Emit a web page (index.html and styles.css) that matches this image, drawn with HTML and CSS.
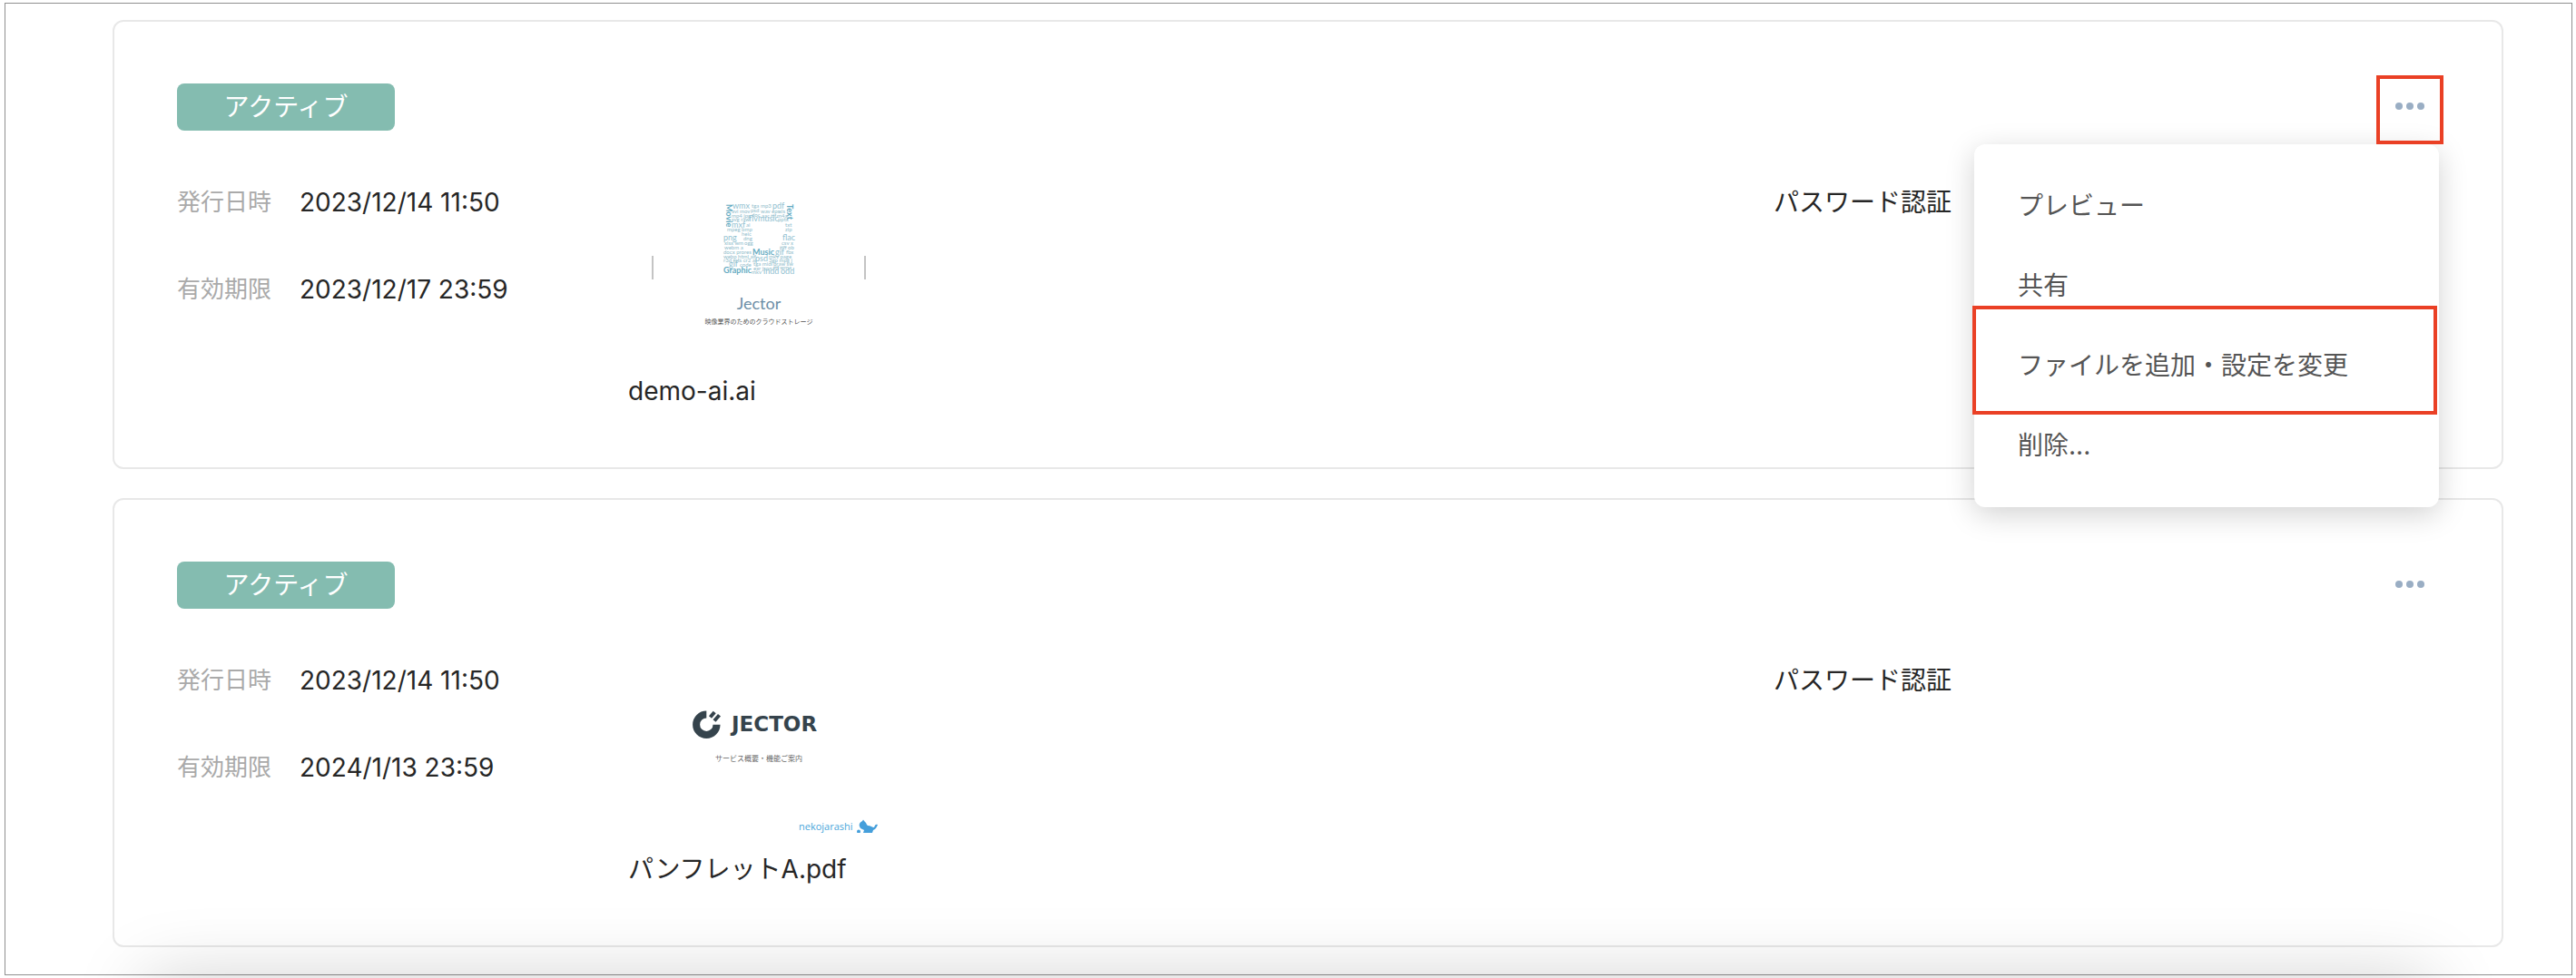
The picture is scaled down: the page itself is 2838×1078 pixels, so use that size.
FILE: index.html
```html
<!DOCTYPE html>
<html lang="ja">
<head>
<meta charset="utf-8">
<title>共有リンク</title>
<link rel="stylesheet" href="styles.css">
</head>
<body>
<main class="frame">
  <article class="card">
    <header class="card-head">
      <span class="badge">アクティブ</span>
      <div class="more-wrap more-marked">
        <button class="more" type="button" aria-label="メニュー" aria-expanded="true"><svg width="34" height="10" viewBox="0 0 34 10"><circle cx="5" cy="5" r="4"/><circle cx="17" cy="5" r="4"/><circle cx="29" cy="5" r="4"/></svg></button>
        <div class="menu">
          <button class="menu-item" type="button">プレビュー</button>
          <button class="menu-item" type="button">共有</button>
          <button class="menu-item menu-item-marked" type="button">ファイルを追加・設定を変更</button>
          <button class="menu-item" type="button">削除...</button>
        </div>
      </div>
    </header>
    <div class="card-body">
      <dl class="dates">
        <div class="date-row"><dt>発行日時</dt><dd>2023/12/14 11:50</dd></div>
        <div class="date-row"><dt>有効期限</dt><dd>2023/12/17 23:59</dd></div>
      </dl>
      <figure class="file">
        <svg class="thumb" viewBox="0 0 288 190">
          <path class="edge" d="M27 81v26M261 81v26"/>
          <g class="cloud">
            <text class="strong" transform="translate(108 24) rotate(90)">Movie</text>
            <text class="strong" transform="translate(175 24) rotate(90)">Text</text>
            <text class="large" x="115" y="29">wmx</text>
            <text x="136" y="28">tga</text>
            <text x="146" y="28">mp3</text>
            <text class="large" x="159" y="29">pdf</text>
            <text x="114" y="34">avi mov</text>
            <text x="135" y="33">psd</text>
            <text x="146" y="34">wav eps</text>
            <text x="166" y="34">xls</text>
            <text x="114" y="39">mp4 jpg</text>
            <text x="136" y="38">doc</text>
            <text x="147" y="39">aac tif</text>
            <text x="164" y="39">m4a</text>
            <text x="114" y="43">svg raw</text>
            <text class="large" x="133" y="43">flv</text>
            <text class="large" x="143" y="43">music</text>
            <text x="165" y="43">pptx</text>
            <text class="large" x="114" y="50">mxf</text>
            <text x="130" y="49">ai</text>
            <text x="173" y="49">txt</text>
            <text x="173" y="54">zip</text>
            <text x="109" y="54">mpeg bmp</text>
            <text x="125" y="59">heic</text>
            <text x="127" y="64">dng</text>
            <text x="128" y="69">ogg</text>
            <text class="large" x="105" y="64">png</text>
            <text class="large" x="170" y="64">flac</text>
            <text x="106" y="69">xlsx wm</text>
            <text x="169" y="69">csv x</text>
            <text x="106" y="74">webm a</text>
            <text x="167" y="74">tiff ob</text>
            <text x="105" y="79">docx prores</text>
            <text class="strong" x="137" y="80">Music</text>
            <text class="large" x="162" y="80">gif</text>
            <text x="174" y="79">fbx</text>
            <text x="105" y="84">webp html aif</text>
            <text class="large" x="140" y="87">psd</text>
            <text x="155" y="84">mkv page</text>
            <text x="105" y="88">r3d mts cr2 ai</text>
            <text x="155" y="88">3gp mpg j</text>
            <text class="large" x="111" y="93">gif</text>
            <text x="123" y="93">code</text>
            <text x="138" y="92">tga midi</text>
            <text x="160" y="92">braw sw</text>
            <text x="138" y="97">exr json</text>
            <text x="160" y="96">ttf wma</text>
            <text class="strong" x="105" y="100">Graphic</text>
            <text x="136" y="101">mkv</text>
            <text class="large" x="149" y="101">indd</text>
            <text class="large" x="168" y="101">odd</text>
          </g>
          <text class="cloud-title" x="144" y="140" text-anchor="middle">Jector</text>
          <text class="caption" x="144" y="156" text-anchor="middle">映像業界のためのクラウドストレージ</text>
        </svg>
        <figcaption>demo-ai.ai</figcaption>
      </figure>
      <p class="auth">パスワード認証</p>
    </div>
  </article>
  <article class="card">
    <header class="card-head">
      <span class="badge">アクティブ</span>
      <div class="more-wrap">
        <button class="more" type="button" aria-label="メニュー"><svg width="34" height="10" viewBox="0 0 34 10"><circle cx="5" cy="5" r="4"/><circle cx="17" cy="5" r="4"/><circle cx="29" cy="5" r="4"/></svg></button>
      </div>
    </header>
    <div class="card-body">
      <dl class="dates">
        <div class="date-row"><dt>発行日時</dt><dd>2023/12/14 11:50</dd></div>
        <div class="date-row"><dt>有効期限</dt><dd>2024/1/13 23:59</dd></div>
      </dl>
      <figure class="file">
        <svg class="thumb" viewBox="0 0 288 190">
          <path class="mark-ring" d="M86.300 59.500A11.200 11.200 0 1 0 97.500 70.700"/>
          <path class="mark-rays" d="M90.500 62.500L95.200 57M95 66.500L100.500 60.200"/>
          <text class="logo" x="114" y="78">JECTOR</text>
          <text class="caption-large" x="144" y="111" text-anchor="middle">サービス概要・機能ご案内</text>
          <text class="maker" x="188" y="187">nekojarashi</text>
          <path class="cat" d="M255 183C254 180 256 178 258 177L259 175.500L261 178C263 179 262 181 264 182C267 182 269 184 271 184C272 181 273 180 275 181C274 183 273 186 270 187L269 190H259L260 187L256 185Z"/>
          <circle class="cat" cx="254" cy="188.500" r="2"/>
        </svg>
        <figcaption>パンフレットA.pdf</figcaption>
      </figure>
      <p class="auth">パスワード認証</p>
    </div>
  </article>
</main>
<div class="dock"></div>
</body>
</html>
```
FILE: styles.css
```css
*, *::after { box-sizing: border-box; margin: 0; padding: 0; }
body { background: #fff; padding: 3px 4px 3px 5px; color: #262626; font: 28px/44px Inter, "Noto Sans CJK JP", sans-serif; }
button { font: inherit; color: inherit; background: none; border: 0; }
.frame { border: 1px solid #8f8f8f; padding: 18px 75px 30px 118px; display: grid; gap: 32px; }
.card { border: 2px solid #e8e8e8; border-radius: 12px; padding: 68px 64px 68px 69px; }
.card-head { display: flex; justify-content: space-between; }
.badge { width: 240px; height: 52px; line-height: 52px; border-radius: 8px; background: #84bcb0; color: #fff; text-align: center; }

/* Three-dot button and its open menu */
.more-wrap { position: relative; }
.more { width: 74px; height: 50px; display: grid; place-items: center; fill: #9aaec4; }
.more-marked::after { content: ""; position: absolute; z-index: 3; inset: -9px 0 auto; height: 76px; border: 4px solid #ea4025; pointer-events: none; }
.menu { position: absolute; z-index: 2; top: 67px; right: 5px; width: 512px; padding: 24px 0; border-radius: 12px; background: #fff; box-shadow: 0 8px 32px rgba(0,0,0,.18); color: #555; }
.menu-item { position: relative; display: block; width: 100%; height: 88px; padding: 0 48px; text-align: left; }
.menu-item-marked::after { content: ""; position: absolute; inset: -22px 2px -10px -2px; border: 4px solid #ea4025; pointer-events: none; }

.card-body { display: flex; padding-top: 57px; }
.dates { width: 497px; }
.date-row { display: flex; height: 96px; line-height: 44px; }
dt { width: 135px; font-size: 26px; color: #aaa; }
.file { width: 1262px; }
.thumb { display: block; width: 288px; height: 190px; margin-bottom: 18px; }
figcaption { height: 38px; }

/* File previews */
.edge { stroke: #c4c4c4; stroke-width: 2; }
.cloud { font: 6px Lato, sans-serif; fill: #8fbccb; }
.cloud .large { font-size: 9px; fill: #8fc0d0; }
.cloud .strong { font-size: 9px; font-weight: 700; fill: #65abc2; }
.cloud-title { font: 18px Lato, sans-serif; fill: #6c8ea6; }
.caption { font: 7px "Noto Sans CJK JP", sans-serif; fill: #555; }
.caption-large { font: 8px "Noto Sans CJK JP", sans-serif; fill: #666; }
.mark-ring { fill: none; stroke: #35434c; stroke-width: 8; }
.mark-rays { fill: none; stroke: #35434c; stroke-width: 4; }
.logo { font: 700 23px "DejaVu Sans", sans-serif; fill: #35434c; }
.maker { font: 11px "Open Sans", sans-serif; fill: #4aa6da; }
.cat { fill: #459fdb; }

/* Panel below the fold, of which only the shadow shows */
.dock { position: fixed; left: 160px; right: 160px; top: 100%; height: 160px; box-shadow: 0 0 80px rgba(0,0,0,.18); pointer-events: none; }
```
